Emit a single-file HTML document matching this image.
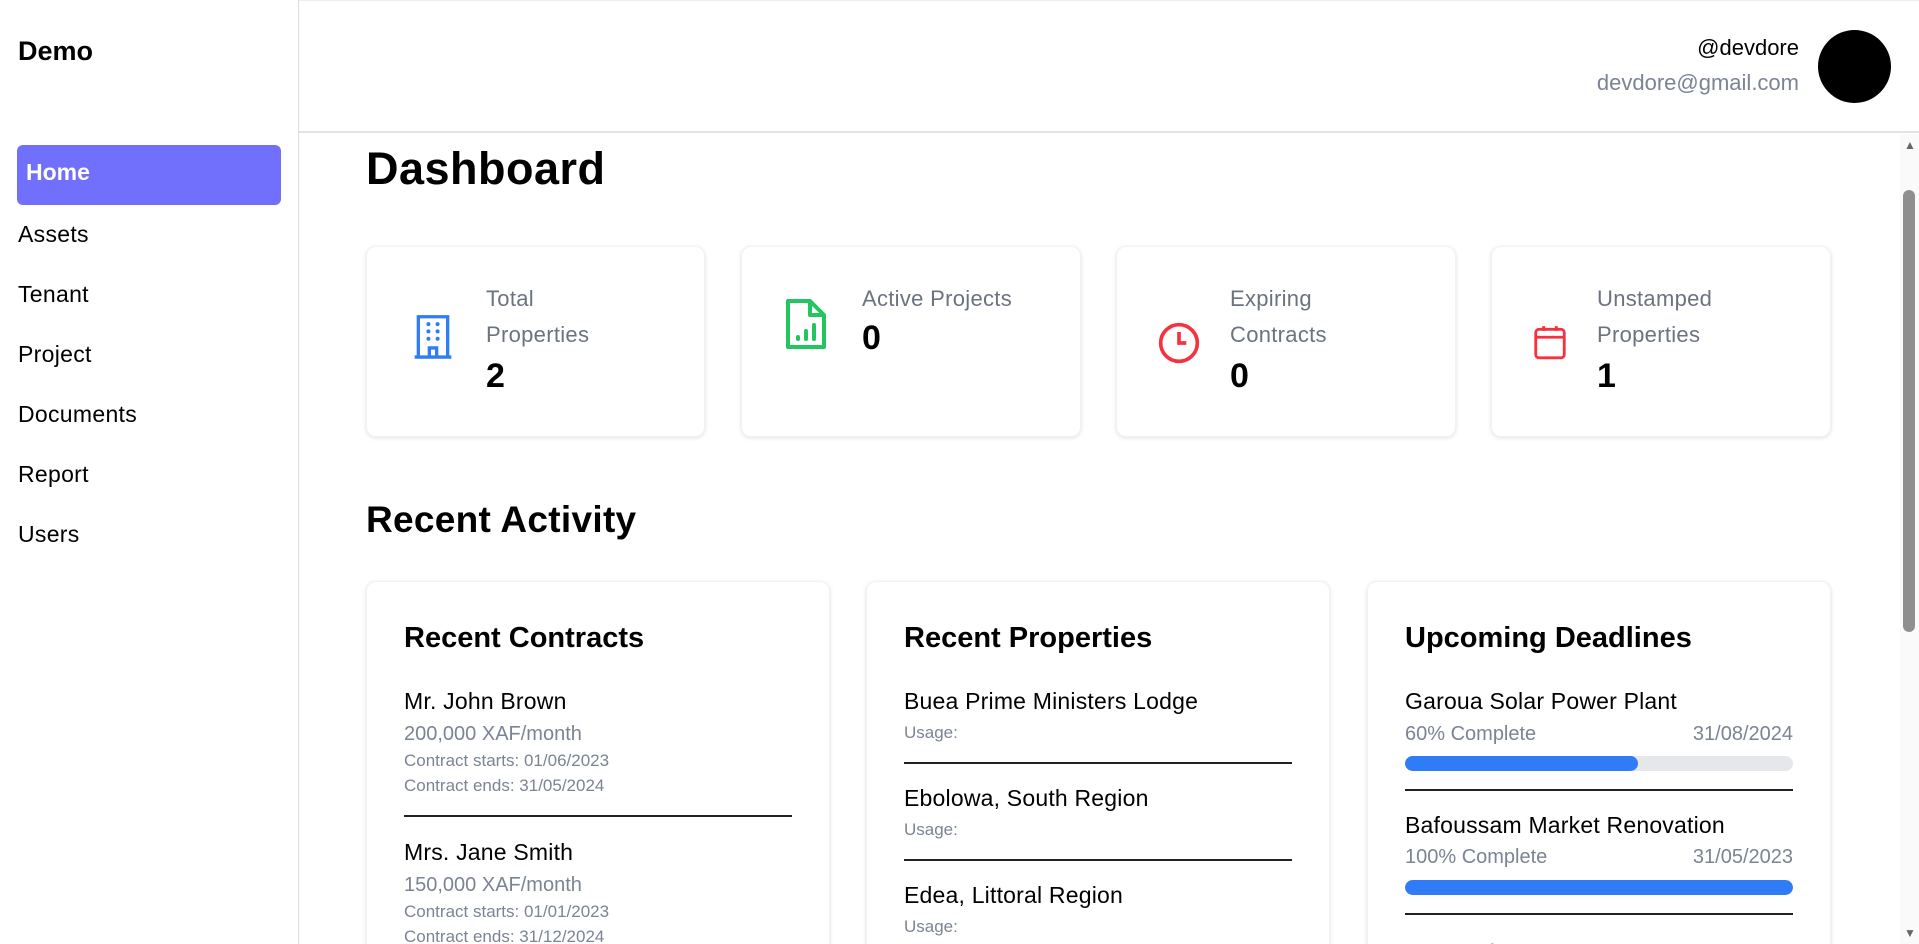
<!DOCTYPE html>
<html><head><meta charset="utf-8"><style>
*{margin:0;padding:0;box-sizing:border-box}
html,body{width:1919px;height:944px;overflow:hidden;background:#fff}
body{font-family:"Liberation Sans",sans-serif;color:#000}
#w{position:relative;width:1919px;height:944px;overflow:hidden}
.a{position:absolute;white-space:nowrap}
.side{position:absolute;left:0;top:0;width:299px;height:944px;border-right:1px solid #ddd}
.nav{position:absolute;left:18px;font-size:23px;line-height:30px;letter-spacing:.3px}
.hdr{position:absolute;left:299px;top:0;right:0;height:133px;border-bottom:2px solid #e3e3e6;border-top:1px solid #eee}
.card{position:absolute;background:#fff;border-radius:10px;box-shadow:0 1px 4px rgba(0,0,0,.12);border:1px solid #f2f2f2}
.lbl{font-size:22px;color:#6b7280;line-height:36px;letter-spacing:.3px}
.val{font-size:34px;font-weight:bold}
.ct{font-size:29px;font-weight:bold;left:37px}
.nm{font-size:23px;left:37px;letter-spacing:.2px}
.g{color:#7b8494}
.hr{position:absolute;left:37px;right:37px;height:1.5px;background:#222}
.bar{position:absolute;left:37px;right:37px;height:15px;border-radius:8px;background:#e5e7eb;overflow:hidden}
.bar i{display:block;height:100%;background:#2f7cf6;border-radius:8px}
</style></head><body><div id="w">
<div class="side">
<div class="a" style="left:18px;top:36px;font-size:27px;font-weight:bold">Demo</div>
<div style="position:absolute;left:17px;top:145px;width:264px;height:60px;background:#7070fd;border-radius:6px"></div>
<div class="a" style="left:26px;top:159px;font-size:23px;font-weight:bold;color:#fff">Home</div>
<div class="nav" style="top:219px">Assets</div>
<div class="nav" style="top:279px">Tenant</div>
<div class="nav" style="top:339px">Project</div>
<div class="nav" style="top:399px">Documents</div>
<div class="nav" style="top:459px">Report</div>
<div class="nav" style="top:519px">Users</div>
</div>
<div class="hdr"></div>
<div class="a" style="right:120px;top:35px;font-size:22px;text-align:right">@devdore</div>
<div class="a" style="right:120px;top:70px;font-size:22px;color:#7b8494;text-align:right">devdore@gmail.com</div>
<div style="position:absolute;left:1818px;top:30px;width:73px;height:73px;border-radius:50%;background:#000"></div>
<div style="position:absolute;left:1900px;top:134px;width:19px;height:810px;background:#fafafa"></div>
<div style="position:absolute;left:1903px;top:190px;width:12px;height:442px;background:#8f8f8f;border-radius:6px"></div>
<div class="a" style="left:1904px;top:138px;font-size:12px;color:#666">▲</div>
<div class="a" style="left:1904px;top:926px;font-size:12px;color:#666">▼</div>

<div class="a" style="left:366px;top:143px;font-size:45px;font-weight:bold;letter-spacing:.5px">Dashboard</div>

<div class="card" style="left:366px;top:246px;width:339px;height:191px">
<svg class="a" style="left:44px;top:66px" width="44" height="46" viewBox="0 0 24 25" fill="none" stroke="#2f7cf6" stroke-width="1.8"><path d="M4 24V2h16v22M2 24h20M10 24v-5h4v5"/><g stroke-linecap="round" stroke-width="2.2"><path d="M9.5 6h0M14.5 6h0M9.5 10h0M14.5 10h0M9.5 14h0M14.5 14h0"/></g></svg>
<div class="a lbl" style="left:119px;top:34px">Total<br>Properties</div>
<div class="a val" style="left:119px;top:110px">2</div></div>

<div class="card" style="left:741px;top:246px;width:340px;height:191px">
<svg class="a" style="left:42px;top:50px" width="44" height="54" viewBox="0 0 22 27" fill="none" stroke="#22c55e" stroke-width="2" stroke-linejoin="round"><path d="M2 2h11l7 7v16H2z"/><path d="M13 2v7h7"/><path d="M7 21v-1M11 21v-4M15 21v-7" stroke-linecap="round"/></svg>
<div class="a lbl" style="left:120px;top:34px">Active Projects</div>
<div class="a val" style="left:120px;top:72px">0</div></div>

<div class="card" style="left:1116px;top:246px;width:340px;height:191px">
<svg class="a" style="left:40px;top:74px" width="44" height="44" viewBox="0 0 24 24" fill="none" stroke="#f5333f" stroke-width="2"><circle cx="12" cy="12" r="10"/><path d="M12 6v6h4"/></svg>
<div class="a lbl" style="left:113px;top:34px">Expiring<br>Contracts</div>
<div class="a val" style="left:113px;top:110px">0</div></div>

<div class="card" style="left:1491px;top:246px;width:340px;height:191px">
<svg class="a" style="left:39px;top:76px" width="38" height="38" viewBox="0 0 24 24" fill="none" stroke="#f5333f" stroke-width="1.8"><rect x="3" y="4" width="18" height="18" rx="2"/><path d="M3 9h18M8 2v3M16 2v3"/></svg>
<div class="a lbl" style="left:105px;top:34px">Unstamped<br>Properties</div>
<div class="a val" style="left:105px;top:110px">1</div></div>

<div class="a" style="left:366px;top:499px;font-size:37px;font-weight:bold;letter-spacing:.3px">Recent Activity</div>

<div class="card" style="left:366px;top:581px;width:464px;height:400px">
<div class="a ct" style="top:40px">Recent Contracts</div>
<div class="a nm" style="top:106px">Mr. John Brown</div>
<div class="a g" style="left:37px;top:141px;font-size:20px">200,000 XAF/month</div>
<div class="a g" style="left:37px;top:169px;font-size:17px">Contract starts: 01/06/2023</div>
<div class="a g" style="left:37px;top:194px;font-size:17px">Contract ends: 31/05/2024</div>
<div class="hr" style="top:233px"></div>
<div class="a nm" style="top:257px">Mrs. Jane Smith</div>
<div class="a g" style="left:37px;top:292px;font-size:20px">150,000 XAF/month</div>
<div class="a g" style="left:37px;top:320px;font-size:17px">Contract starts: 01/01/2023</div>
<div class="a g" style="left:37px;top:345px;font-size:17px">Contract ends: 31/12/2024</div>
</div>

<div class="card" style="left:866px;top:581px;width:464px;height:400px">
<div class="a ct" style="top:40px">Recent Properties</div>
<div class="a nm" style="top:106px">Buea Prime Ministers Lodge</div>
<div class="a g" style="left:37px;top:141px;font-size:17px">Usage:</div>
<div class="hr" style="top:180px"></div>
<div class="a nm" style="top:203px">Ebolowa, South Region</div>
<div class="a g" style="left:37px;top:238px;font-size:17px">Usage:</div>
<div class="hr" style="top:277px"></div>
<div class="a nm" style="top:300px">Edea, Littoral Region</div>
<div class="a g" style="left:37px;top:335px;font-size:17px">Usage:</div>
</div>

<div class="card" style="left:1367px;top:581px;width:464px;height:400px">
<div class="a ct" style="top:40px">Upcoming Deadlines</div>
<div class="a nm" style="top:106px">Garoua Solar Power Plant</div>
<div class="a g" style="left:37px;top:141px;font-size:20px">60% Complete</div>
<div class="a g" style="right:37px;top:141px;font-size:20px">31/08/2024</div>
<div class="bar" style="top:174px"><i style="width:60%"></i></div>
<div class="hr" style="top:207px"></div>
<div class="a nm" style="top:230px">Bafoussam Market Renovation</div>
<div class="a g" style="left:37px;top:264px;font-size:20px">100% Complete</div>
<div class="a g" style="right:37px;top:264px;font-size:20px">31/05/2023</div>
<div class="bar" style="top:298px"><i style="width:100%"></i></div>
<div class="hr" style="top:331px"></div>
<div class="a nm" style="top:358px">Yaoundé Water Supply Upgrade</div>
</div>
</div></body></html>
